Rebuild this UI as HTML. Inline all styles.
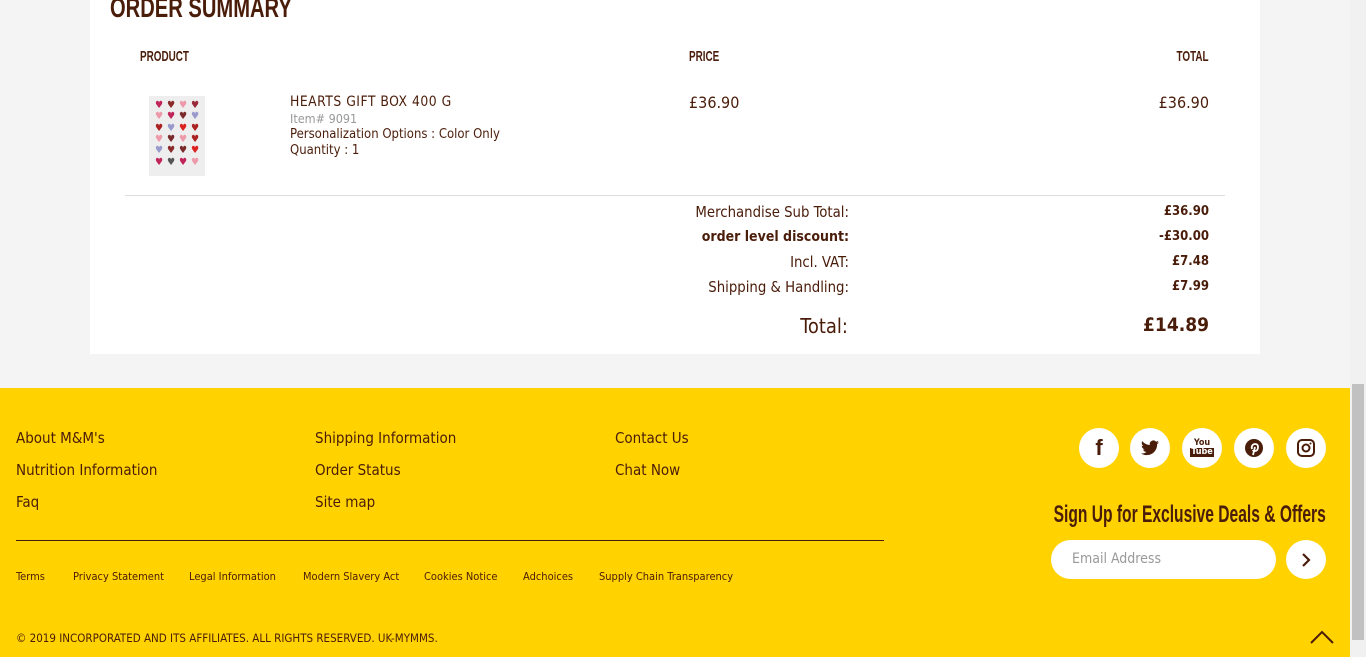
<!DOCTYPE html>
<html><head><style>
*{margin:0;padding:0;box-sizing:border-box}
body{width:1366px;height:657px;overflow:hidden;background:#f4f4f4;font-family:"DejaVu Sans Condensed","Liberation Sans",sans-serif;color:#4a1d0a;position:relative}
.card{position:absolute;left:90px;top:0;width:1170px;height:354px;background:#fff}
.a{position:absolute;white-space:nowrap}
h1{position:absolute;left:20px;top:-8px;font-family:"Liberation Sans",sans-serif;font-weight:bold;font-size:28px;transform:scaleX(.72);transform-origin:left}
.hd{top:48px;font-family:"Liberation Sans",sans-serif;font-weight:bold;font-size:15px;transform:scaleX(.66)}
.r{text-align:right}
.foot{position:absolute;left:0;top:388px;width:1350px;height:269px;background:#ffd200}
.fl{font-size:15px}
.sm{font-size:11px}
.lb{font-size:14.8px}
.circ{position:absolute;top:428px;width:40px;height:40px;border-radius:50%;background:#fff;display:flex;align-items:center;justify-content:center}
.sb{position:absolute;left:1350px;top:0;width:16px;height:657px;background:#f1f1f1}
</style></head><body>
<div class="card">
<h1>ORDER SUMMARY</h1>
<div class="a hd" style="left:50px;transform-origin:left">PRODUCT</div>
<div class="a hd" style="left:599px;transform-origin:left">PRICE</div>
<div class="a hd" style="right:51px;transform-origin:right">TOTAL</div>
<div class="a" style="left:59px;top:96px;width:56px;height:80px;background:#eee;display:grid;grid-template-columns:repeat(4,1fr);padding:4px 4px 8px;font-size:10px;line-height:11px;text-align:center;color:#c0245a">
<span>♥</span><span style="color:#8a2a2a">♥</span><span style="color:#e9a">♥</span><span style="color:#9a2a3a">♥</span>
<span style="color:#e9a">♥</span><span>♥</span><span style="color:#7a2a2a">♥</span><span style="color:#99c">♥</span>
<span style="color:#a22">♥</span><span style="color:#99c">♥</span><span style="color:#d22">♥</span><span style="color:#a22">♥</span>
<span style="color:#e9a">♥</span><span style="color:#7a2a2a">♥</span><span style="color:#e9a">♥</span><span style="color:#a22">♥</span>
<span style="color:#99c">♥</span><span style="color:#8a2a2a">♥</span><span style="color:#7a2a2a">♥</span><span style="color:#d22">♥</span>
<span>♥</span><span style="color:#555">♥</span><span>♥</span><span style="color:#e9a">♥</span>
</div>
<div class="a" style="left:200px;top:94px;font-size:13.8px;letter-spacing:.5px">HEARTS GIFT BOX 400 G</div>
<div class="a" style="left:200px;top:111px;font-size:12.5px;color:#999">Item# 9091</div>
<div class="a" style="left:200px;top:127px;font-size:13px">Personalization Options : Color Only</div>
<div class="a" style="left:200px;top:143px;font-size:13px">Quantity : 1</div>
<div class="a" style="left:599px;top:93px;font-size:16px">£36.90</div>
<div class="a r" style="right:51px;top:93px;font-size:16px">£36.90</div>
<div class="a" style="left:35px;top:195px;width:1100px;height:1px;background:#ddd"></div>
<div class="a r lb" style="right:411px;top:204px">Merchandise Sub Total:</div>
<div class="a r lb" style="right:411px;top:229px;font-weight:bold;font-size:14px">order level discount:</div>
<div class="a r lb" style="right:411px;top:254px">Incl. VAT:</div>
<div class="a r lb" style="right:411px;top:279px">Shipping &amp; Handling:</div>
<div class="a r" style="right:412px;top:314px;font-size:20px">Total:</div>
<div class="a r" style="right:51px;top:204px;font-size:13px;font-weight:bold">£36.90</div>
<div class="a r" style="right:51px;top:229px;font-size:13px;font-weight:bold">-£30.00</div>
<div class="a r" style="right:51px;top:254px;font-size:13px;font-weight:bold">£7.48</div>
<div class="a r" style="right:51px;top:279px;font-size:13px;font-weight:bold">£7.99</div>
<div class="a r" style="right:51px;top:314px;font-size:19px;font-weight:bold">£14.89</div>
</div>
<div class="foot"></div>
<div class="a fl" style="left:16px;top:429px">About M&amp;M's</div>
<div class="a fl" style="left:16px;top:461px">Nutrition Information</div>
<div class="a fl" style="left:16px;top:493px">Faq</div>
<div class="a fl" style="left:315px;top:429px">Shipping Information</div>
<div class="a fl" style="left:315px;top:461px">Order Status</div>
<div class="a fl" style="left:315px;top:493px">Site map</div>
<div class="a fl" style="left:615px;top:429px">Contact Us</div>
<div class="a fl" style="left:615px;top:461px">Chat Now</div>
<div class="a" style="left:16px;top:540px;width:868px;height:1px;background:#4a1d0a"></div>
<div class="a sm" style="left:16px;top:570px">Terms</div>
<div class="a sm" style="left:73px;top:570px">Privacy Statement</div>
<div class="a sm" style="left:189px;top:570px">Legal Information</div>
<div class="a sm" style="left:303px;top:570px">Modern Slavery Act</div>
<div class="a sm" style="left:424px;top:570px">Cookies Notice</div>
<div class="a sm" style="left:523px;top:570px">Adchoices</div>
<div class="a sm" style="left:599px;top:570px">Supply Chain Transparency</div>
<div class="a" style="left:16px;top:631px;font-size:11.5px">© 2019  INCORPORATED AND ITS AFFILIATES. ALL RIGHTS RESERVED.  UK-MYMMS.</div>
<div class="circ" style="left:1079px;font-weight:bold;font-size:22px;font-family:'Liberation Sans'">f</div>
<div class="circ" style="left:1130px"><svg width="18" height="16" viewBox="0 0 24 20"><path d="M24 2.4a10 10 0 0 1-2.8.8A5 5 0 0 0 23.3.4a10 10 0 0 1-3.1 1.2A4.9 4.9 0 0 0 11.8 6 14 14 0 0 1 1.7.9a4.9 4.9 0 0 0 1.5 6.6A4.9 4.9 0 0 1 1 6.9a4.9 4.9 0 0 0 3.9 4.9 5 5 0 0 1-2.2.1 4.9 4.9 0 0 0 4.6 3.4A9.9 9.9 0 0 1 0 17.3 14 14 0 0 0 7.5 19.5c9.1 0 14-7.5 14-14v-.6A10 10 0 0 0 24 2.4z" fill="#4a1d0a"/></svg></div>
<div class="circ" style="left:1182px;flex-direction:column;font-size:9px;font-weight:bold;line-height:9px"><span>You</span><span style="background:#4a1d0a;color:#fff;padding:0 1px">Tube</span></div>
<div class="circ" style="left:1234px"><svg width="20" height="20" viewBox="0 0 20 20"><circle cx="10" cy="10" r="9" fill="#4a1d0a"/><path d="M9 17l2-8M8 11c-1-3 1-5 3-5s3 1 3 3-1 4-3 4-2-1-2-1" stroke="#fff" stroke-width="1.8" fill="none"/></svg></div>
<div class="circ" style="left:1286px"><svg width="18" height="18" viewBox="0 0 18 18"><rect x="1" y="1" width="16" height="16" rx="4" stroke="#4a1d0a" stroke-width="2" fill="none"/><circle cx="9" cy="9" r="3.5" stroke="#4a1d0a" stroke-width="2" fill="none"/><circle cx="13.5" cy="4.5" r="1" fill="#4a1d0a"/></svg></div>
<div class="a" style="right:40px;top:501px;font-family:'Liberation Sans',sans-serif;font-weight:bold;font-size:24px;transform:scaleX(.65);transform-origin:right">Sign Up for Exclusive Deals &amp; Offers</div>
<div class="a" style="left:1051px;top:540px;width:225px;height:39px;border-radius:20px;background:#fff;padding:11px 21px;font-size:14px;color:#999">Email Address</div>
<div class="circ" style="left:1286px;top:540px;width:40px;height:39px"><svg width="12" height="16"><path d="M3 2l6 6-6 6" stroke="#4a1d0a" stroke-width="2.2" fill="none"/></svg></div>
<svg class="a" style="left:1310px;top:630px" width="24" height="14"><path d="M1 13L12 2l11 11" stroke="#4a1d0a" stroke-width="2" fill="none"/></svg>
<div class="sb"><div style="position:absolute;left:2px;top:384px;width:12px;height:256px;background:#c1c1c1"></div></div>
</body></html>
